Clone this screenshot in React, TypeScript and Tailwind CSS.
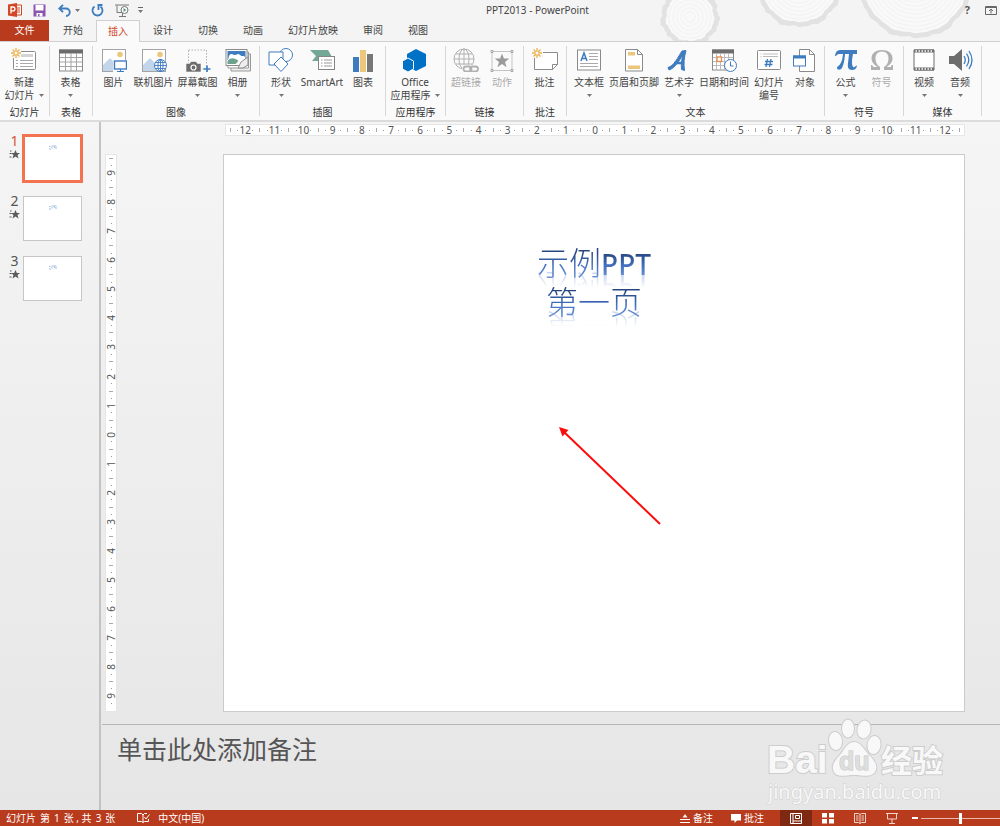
import { useState } from "react";
import type { ReactNode } from "react";

const BLUE = "#3f7cbf";
const GRAY = "#6d6d6d";
const SAND = "#ecc67b";

/* ── Ribbon icons, all drawn on a 26 × 24 grid ── */

function Icon({ children }: { children: ReactNode }) {
  return (
    <svg viewBox="0 0 26 24" className="h-6 w-[26px] shrink-0" fill="none" aria-hidden="true">
      {children}
    </svg>
  );
}

function Sun() {
  return (
    <g stroke="#edb14f" strokeWidth="1.3">
      <circle cx="5" cy="5" r="2.2" fill="#fff" />
      <path d="M5 0v2M5 8v2M0 5h2M8 5h2M1.5 1.5l1.4 1.4M7.1 7.1l1.4 1.4M8.5 1.5L7.1 2.9M2.9 7.1L1.5 8.5" />
    </g>
  );
}

function Photo() {
  return (
    <g>
      <rect x="1.5" y="1.5" width="23" height="22" fill="#fff" stroke="#a3a3a3" />
      <path d="M2 17l7-7 6 6 3-2 6 4v5H2z" fill="#c3d5ea" />
      <circle cx="19" cy="6.5" r="2.8" fill={SAND} />
    </g>
  );
}

const icons: Record<string, ReactNode> = {
  newSlide: (
    <>
      <rect x="2.5" y="3.5" width="22" height="18" rx="1" fill="#fff" stroke="#8c8c8c" />
      <rect x="10" y="6" width="12" height="3" fill="#d4d4d4" />
      <path d="M5 12.5h2M9 12.5h13M5 15.5h2M9 15.5h13M5 18.5h2M9 18.5h13" stroke="#a9a9a9" />
      <rect x="0" y="0" width="10" height="10" fill="#fafafa" />
      <Sun />
    </>
  ),
  table: (
    <>
      <rect x="1.5" y="2" width="23" height="21" fill="#fff" stroke="#8a8a8a" />
      <rect x="1" y="1.5" width="24" height="4" fill={GRAY} />
      <path d="M2 9.5h22M2 14h22M2 18.5h22M7.5 5v18M13 5v18M18.5 5v18" stroke="#a5a5a5" />
    </>
  ),
  picture: (
    <>
      <Photo />
      <rect x="12" y="12" width="14" height="12" fill="#fafafa" />
      <rect x="13.5" y="13" width="12" height="8" fill="#fff" stroke={BLUE} strokeWidth="1.4" />
      <path d="M19.5 21v2M16 23.5h7" stroke={BLUE} strokeWidth="1.2" />
    </>
  ),
  onlinePicture: (
    <>
      <Photo />
      <circle cx="19.5" cy="17.5" r="6" fill="#fff" stroke={BLUE} />
      <ellipse cx="19.5" cy="17.5" rx="2.6" ry="6" stroke={BLUE} />
      <path d="M13.5 17.5h12M14.5 14.5h10M14.5 20.5h10M19.5 11.5v12" stroke={BLUE} strokeWidth=".9" />
    </>
  ),
  screenshot: (
    <>
      <rect x="3.5" y="2" width="18" height="19" stroke="#b0b0b0" strokeDasharray="1.5 1.5" />
      <path d="M1 15.5h3.5L6 13.5h5l1.5 2H16V24H1z" fill={GRAY} stroke="#fafafa" strokeWidth=".6" />
      <circle cx="8.5" cy="19.5" r="2.5" stroke="#fff" strokeWidth="1.2" />
      <path d="M22 17.5v7M18.5 21h7" stroke={BLUE} strokeWidth="1.7" />
    </>
  ),
  album: (
    <>
      <path d="M6 6h19.5v17H6z" fill="#eee" stroke="#999" />
      <path d="M3 4h20.5v16H3z" fill="#fff" stroke="#999" />
      <rect x="1" y="1.5" width="21" height="16" fill="#fff" stroke="#8b8b8b" />
      <path d="M2.5 3h18v9h-18z" fill={BLUE} />
      <path d="M4 8c2-4 4-1 6-1s3-2 5 0 4 0 5 2v3H3z" fill="#fff" />
      <path d="M2.5 13c4-4 7-3 11 0l-3 3h-8z" fill="#6da28e" />
      <path d="M13 20l3-6 7-5v8l-5 3z" fill="#eee" stroke="#8b8b8b" />
    </>
  ),
  shapes: (
    <g stroke={BLUE} fill="#fff">
      <circle cx="18" cy="7" r="6.5" />
      <path d="M1 4h14v13H1z" />
      <path d="M13 9l7 7-7 7.5L6 16z" />
    </g>
  ),
  smartArt: (
    <>
      <path d="M1 2h18l4 7-2 4H3l4-5z" fill="#73a896" />
      <rect x="9.5" y="8.5" width="16" height="13" fill="#fff" stroke="#858585" />
      <path d="M12 12h1.5M15 12h8M12 15h1.5M15 15h8M12 18h1.5M15 18h8" stroke="#999" />
    </>
  ),
  chart: (
    <>
      <path d="M3 9h6v15H3z" fill={BLUE} />
      <path d="M10 2h6v22h-6z" fill={SAND} />
      <path d="M17 6h6v18h-6z" fill="#777" />
    </>
  ),
  office: (
    <g fill="#0072c6">
      <path d="M14 1l10 5v12l-10 5-9-5V6z" />
      <path d="M6 10l5.5 3v8L6 24l-5.500-3v-8z" stroke="#fafafa" />
    </g>
  ),
  hyperlink: (
    <g stroke="#b1b1b1">
      <circle cx="11" cy="11" r="10" />
      <ellipse cx="11" cy="11" rx="5" ry="10" />
      <path d="M11 1v20M1 11h20M3 6h16M3 16h16" />
      <rect x="9" y="17" width="17" height="7" fill="#fafafa" stroke="none" />
      <rect x="10.5" y="18.5" width="8" height="5" rx="2.5" strokeWidth="1.8" />
      <rect x="17" y="18.5" width="8" height="5" rx="2.5" strokeWidth="1.8" />
    </g>
  ),
  action: (
    <>
      <rect x="3" y="3.5" width="20" height="19" stroke="#c4c4c4" />
      <path d="M2 2.5h2v2H2zM22 2.5h2v2h-2zM2 21.5h2v2H2zM22 21.5h2v2h-2z" fill="#fff" stroke="#9c9c9c" strokeWidth=".9" />
      <path d="M13 5.5l1.9 5.1h5.4l-4.3 3.3 1.6 5.3-4.6-3.2-4.6 3.2 1.6-5.3-4.3-3.3h5.4z" fill="#9b9b9b" />
    </>
  ),
  comment: (
    <>
      <path d="M2.5 4.5h23v12l-5 5h-18z" fill="#fff" stroke="#8c8c8c" />
      <path d="M20.5 21.5v-5h5" stroke="#8c8c8c" />
      <rect x="0" y="0" width="11" height="10" fill="#fafafa" />
      <Sun />
    </>
  ),
  textBox: (
    <>
      <rect x="1.5" y="2" width="23" height="20" fill="#fff" stroke="#8a8a8a" />
      <path d="M5 13l3-8 3 8M6 10.5h4" stroke={BLUE} strokeWidth="1.5" />
      <path d="M13 5.5h9M13 8.5h9M13 11.5h9M4 15.5h18M4 18.5h18" stroke="#aaa" />
    </>
  ),
  headerFooter: (
    <>
      <path d="M4.5 1.5h12l5 5V23h-17z" fill="#fff" stroke="#8a8a8a" />
      <path d="M16.5 1.5v5h5" stroke="#8a8a8a" />
      <path d="M7 4h7v3.5H7zM7 17.5h12V21H7z" fill={SAND} />
    </>
  ),
  wordArt: (
    <>
      <path d="M2 19.5C8 18 12 9 16 3l4-.5c-2 7-2.500 13-1.500 20l-3-1c-.5-5 0-10 1.500-15C13 13 9 20 3 22z" fill={BLUE} stroke={BLUE} />
      <path d="M8 15h10" stroke={BLUE} strokeWidth="2.5" />
    </>
  ),
  dateTime: (
    <>
      <rect x="1.5" y="2" width="21" height="20" fill="#fff" stroke="#8a8a8a" />
      <path d="M1 1.5h22v4H1z" fill={GRAY} />
      <path d="M2 9.5h20M2 13.5h20M2 17.5h20M5.5 6v16M9.5 6v16M13.5 6v16M17.5 6v16" stroke="#bbb" />
      <rect x="6" y="9" width="4.5" height="4.5" fill="#fff" stroke="#e58a4c" strokeWidth="1.3" />
      <circle cx="19.5" cy="17.5" r="6" fill="#fff" stroke={BLUE} />
      <path d="M19.5 13.5V18h3" stroke={BLUE} />
    </>
  ),
  slideNumber: (
    <>
      <rect x="1.5" y="2.5" width="23" height="19" rx="1" fill="#fff" stroke="#8a8a8a" />
      <path d="M4.5 6h1M7 6h15M4.5 8.5h1M7 8.5h15" stroke="#bbb" />
      <path d="M11.5 11L10 19M15 11l-1.5 8M9 13.5h8M8.5 16.5h8" stroke={BLUE} strokeWidth="1.3" />
    </>
  ),
  object: (
    <>
      <path d="M7.5 1.5h10l5 5v17h-15z" fill="#fff" stroke="#8a8a8a" />
      <path d="M17.5 1.5v5h5" stroke="#8a8a8a" />
      <rect x="1.5" y="8" width="12" height="10" fill="#fff" stroke={BLUE} />
      <path d="M1 7.5h13v3H1z" fill={BLUE} />
    </>
  ),
  equation: (
    <path
      d="M2 8c.5-4 2-6 5-6h17v4h-4c-1 5-1.500 9-.5 12 .8 1.800 2.500 1.500 3.500-.5l1 .5c-1 3-2.500 4-5 4-4 0-4.500-3-4-7l1-9h-4c-.5 7-1.500 11-3 14-1.500 2.500-5 2-5 0 0-1.500 1.500-2 2.500-3C9 14 9.500 10 10 6H7C5 6 4 6.500 3 8z"
      fill={BLUE}
    />
  ),
  symbol: (
    <path
      d="M2 22v-5h1.500c0 1.500.5 2 2 2h3C5 17 2.500 14 2.500 10.500 2.500 5 7 2 13 2s10.500 3 10.500 8.500c0 3.500-2.500 6.500-6 8.500h3c1.500 0 2-.5 2-2H24v5h-9v-3c3-1.500 4.500-5 4.500-8.500 0-4-2-7-6.500-7s-6.500 3-6.500 7c0 3.500 1.500 7 4.500 8.500v3z"
      fill="#b0b0b0"
    />
  ),
  video: (
    <>
      <path d="M3 2h20v20H3z" fill="#fff" stroke={GRAY} />
      <path d="M3 3h20M3 21h20" stroke={GRAY} strokeWidth="3" />
      <path d="M4.5 3h17M4.5 21h17" stroke="#fff" strokeWidth="1.5" strokeDasharray="1.5 1.5" />
    </>
  ),
  audio: (
    <>
      <path d="M2 8h5l8-7v22l-8-7H2z" fill={GRAY} />
      <path d="M17 8q2.5 4 0 8M19.5 5.5q4.5 6.5 0 13M22 3q6 9 0 18" stroke={BLUE} strokeWidth="1.3" />
    </>
  ),
};

type Tool = {
  icon: string;
  label: string;
  second?: string;
  menu?: boolean;
  disabled?: boolean;
  width: string;
};

const groups: { title: string; width: string; tools: Tool[] }[] = [
  {
    title: "幻灯片",
    width: "w-[50px]",
    tools: [{ icon: "newSlide", label: "新建", second: "幻灯片", menu: true, width: "w-12" }],
  },
  {
    title: "表格",
    width: "w-[43px]",
    tools: [{ icon: "table", label: "表格", menu: true, width: "w-9" }],
  },
  {
    title: "图像",
    width: "w-[167px]",
    tools: [
      { icon: "picture", label: "图片", width: "w-9" },
      { icon: "onlinePicture", label: "联机图片", width: "w-11" },
      { icon: "screenshot", label: "屏幕截图", menu: true, width: "w-11" },
      { icon: "album", label: "相册", menu: true, width: "w-9" },
    ],
  },
  {
    title: "插图",
    width: "w-[126px]",
    tools: [
      { icon: "shapes", label: "形状", menu: true, width: "w-9" },
      { icon: "smartArt", label: "SmartArt", width: "w-[46px]" },
      { icon: "chart", label: "图表", width: "w-9" },
    ],
  },
  {
    title: "应用程序",
    width: "w-[60px]",
    tools: [{ icon: "office", label: "Office", second: "应用程序", menu: true, width: "w-14" }],
  },
  {
    title: "链接",
    width: "w-[78px]",
    tools: [
      { icon: "hyperlink", label: "超链接", disabled: true, width: "w-9" },
      { icon: "action", label: "动作", disabled: true, width: "w-9" },
    ],
  },
  {
    title: "批注",
    width: "w-[43px]",
    tools: [{ icon: "comment", label: "批注", width: "w-9" }],
  },
  {
    title: "文本",
    width: "w-[258px]",
    tools: [
      { icon: "textBox", label: "文本框", menu: true, width: "w-10" },
      { icon: "headerFooter", label: "页眉和页脚", width: "w-[50px]" },
      { icon: "wordArt", label: "艺术字", menu: true, width: "w-10" },
      { icon: "dateTime", label: "日期和时间", width: "w-[50px]" },
      { icon: "slideNumber", label: "幻灯片", second: "编号", width: "w-10" },
      { icon: "object", label: "对象", width: "w-8" },
    ],
  },
  {
    title: "符号",
    width: "w-[79px]",
    tools: [
      { icon: "equation", label: "公式", menu: true, width: "w-9" },
      { icon: "symbol", label: "符号", disabled: true, width: "w-9" },
    ],
  },
  {
    title: "媒体",
    width: "w-[78px]",
    tools: [
      { icon: "video", label: "视频", menu: true, width: "w-9" },
      { icon: "audio", label: "音频", menu: true, width: "w-9" },
    ],
  },
];

const tabs = ["开始", "插入", "设计", "切换", "动画", "幻灯片放映", "审阅", "视图"];

function Caret() {
  return (
    <svg viewBox="0 0 5 3" className="h-[3px] w-[5px] shrink-0" aria-hidden="true">
      <path d="M0 0h5L2.5 3z" fill="#777" />
    </svg>
  );
}

/* ── Tree-ring decoration behind the title bar ── */

function ringPath(cx: number, cy: number, r: number, rough: number) {
  const points = Array.from({ length: 90 }, (_, i) => {
    const a = (i / 90) * Math.PI * 2;
    const k = r + rough * (Math.sin(a * 7) * 0.6 + Math.sin(a * 13 + 1) * 0.7 + Math.sin(a * 29) * 0.6);
    return `${(cx + Math.cos(a) * k).toFixed(1)} ${(cy + Math.sin(a) * k).toFixed(1)}`;
  });
  return `M${points.join("L")}Z`;
}

function TreeRings() {
  const trunks = [
    { cx: 50, cy: 17, r: 29 },
    { cx: 159, cy: -16, r: 43 },
    { cx: 275, cy: -20, r: 58 },
  ];
  return (
    <svg viewBox="0 0 360 41" className="absolute right-0 top-0 h-[41px] w-[360px]" aria-hidden="true">
      {trunks.map(({ cx, cy, r }) => (
        <g key={cx} fill="none">
          <path d={ringPath(cx, cy, r, 1.1)} fill="#e2e2e2" />
          <path d={ringPath(cx, cy, r - 5, 0.6)} fill="#f9f9f9" />
          {Array.from({ length: Math.floor(r / 4) - 2 }, (_, i) => (
            <path key={i} d={ringPath(cx, cy, r - 8 - i * 4, 0.2)} stroke="#f2f2f2" />
          ))}
        </g>
      ))}
    </svg>
  );
}

function TitleBar() {
  return (
    <div className="relative flex h-5 items-center">
      <div className="flex w-[146px] items-center pl-2">
        <svg viewBox="0 0 14 14" className="h-3.5 w-3.5" role="img" aria-label="PowerPoint">
          <path d="M8 2h5.5v10H8" fill="#fff" stroke="#d24726" />
          <path d="M9 5h3M9 7h3M9 9h3" stroke="#d24726" />
          <path d="M0 1.5L9 0v14l-9-1.5z" fill="#d24726" />
          <path d="M3 10.5V4h2a1.8 1.8 0 010 3.8H3" fill="none" stroke="#fff" strokeWidth="1.3" />
        </svg>
        <button aria-label="保存" className="ml-[11px]">
          <svg viewBox="0 0 13 13" className="h-[13px] w-[13px]">
            <path d="M.5.5h12v12H.5z" fill="#8b55ae" />
            <path d="M2.5 1h8v5.5h-8zM3.5 9h6v3.5h-6z" fill="#fff" />
            <path d="M5 10h1.5v2.5H5z" fill="#8b55ae" />
          </svg>
        </button>
        <button aria-label="撤消" className="ml-3 flex items-center gap-1">
          <svg viewBox="0 0 13 13" className="h-[13px] w-[13px]" fill="none" stroke={BLUE} strokeWidth="1.9">
            <path d="M5 .8L1.3 4.5 5 8.2M1.5 4.5H8A3.6 3.6 0 018 12" />
          </svg>
          <Caret />
        </button>
        <button aria-label="重复" className="ml-[11px]">
          <svg viewBox="0 0 13 13" className="h-[13px] w-[13px]" fill="none" stroke={BLUE} strokeWidth="1.8">
            <path d="M3.5 2.5A5 5 0 109.5 2.5M6.5 1h5M7.5 1v5" />
          </svg>
        </button>
        <button aria-label="从头开始" className="ml-[11px]">
          <svg viewBox="0 0 15 13" className="h-[13px] w-[15px]" fill="none" stroke="#777">
            <path d="M0 1h14M2 1.5v7h5M7.5 9v3M4 12.5h7" />
            <circle cx="9.5" cy="6" r="3.5" fill="#fff" />
            <path d="M8.5 4v4l3-2z" fill="#5c9f83" stroke="none" />
          </svg>
        </button>
        <button aria-label="自定义快速访问工具栏" className="ml-2 flex flex-col items-center gap-0.5">
          <span className="h-px w-[5px] bg-[#666]" />
          <Caret />
        </button>
      </div>
      <h1 className="flex-1 text-center text-[10px] text-[#444]">PPT2013 - PowerPoint</h1>
      <div className="flex w-[71px] items-center justify-end gap-[15px] pr-[3px]">
        <button aria-label="帮助" className="text-[11px] font-bold leading-3 text-[#555]">
          ?
        </button>
        <button aria-label="功能区显示选项">
          <svg viewBox="0 0 12 9" className="h-[9px] w-3" fill="none" stroke="#666">
            <path d="M.5.5h11v8H.5zM.5 1.5h11M6 7.5v-4M4 5l2-2 2 2" />
          </svg>
        </button>
      </div>
    </div>
  );
}

function TabBar({ active, onSelect }: { active: string; onSelect: (tab: string) => void }) {
  return (
    <nav className="relative flex h-[22px] border-b border-[#d0d0d0] text-[10px]">
      <button className="h-[21px] w-[49px] bg-[#b83b1d] text-white">文件</button>
      <div className="ml-0.5 flex gap-px">
        {tabs.map((tab) => (
          <button
            key={tab}
            onClick={() => onSelect(tab)}
            className={
              tab === active
                ? "h-[22px] border border-b-0 border-[#d0d0d0] bg-[#fafafa] px-[11px] text-[#d24726]"
                : "h-[21px] px-3 text-[#444]"
            }
          >
            {tab}
          </button>
        ))}
      </div>
    </nav>
  );
}

function ToolButton({ tool }: { tool: Tool }) {
  return (
    <button
      disabled={tool.disabled}
      className={`flex flex-col items-center whitespace-nowrap text-[10px] leading-[13px] text-[#444] disabled:text-[#aaa] ${tool.width}`}
    >
      <Icon>{icons[tool.icon]}</Icon>
      <span className="mt-1">{tool.label}</span>
      <span className="flex h-[13px] items-center gap-1">
        {tool.second}
        {tool.menu && <Caret />}
      </span>
    </button>
  );
}

function Ribbon() {
  return (
    <div className="flex h-20 border-b-2 border-[#dcdcdc] bg-[#fafafa] py-1">
      {groups.map((group) => (
        <section
          key={group.title}
          className={`flex shrink-0 flex-col justify-between border-r border-[#d8d8d8] pt-0.5 ${group.width}`}
        >
          <div className="flex justify-center pr-px">
            {group.tools.map((tool) => (
              <ToolButton key={tool.icon} tool={tool} />
            ))}
          </div>
          <h2 className="text-center text-[10px] leading-2 text-[#333]">{group.title}</h2>
        </section>
      ))}
    </div>
  );
}

function Ruler({ max, vertical = false }: { max: number; vertical?: boolean }) {
  const marks = Array.from({ length: max * 2 + 1 }, (_, i) => Math.abs(i - max));
  const slot = "flex flex-1 basis-0 items-center justify-center min-w-0 min-h-0";
  const flow = vertical ? "flex-col" : "flex-row";
  return (
    <div
      aria-hidden="true"
      className={`flex overflow-hidden border border-[#e6e6e6] bg-white text-[10px] leading-none text-[#555] ${
        vertical ? "w-3 flex-col pb-1" : "h-3 flex-row px-px"
      }`}
    >
      {marks.map((n, i) => (
        <div key={i} className={`flex min-h-0 min-w-0 flex-[4] ${flow}`}>
          <span className={slot}>
            <i className={vertical ? "h-px w-1 bg-[#aaa]" : "h-1 w-px bg-[#aaa]"} />
          </span>
          <span className={slot}>
            <i className="h-px w-px bg-[#999]" />
          </span>
          <span className={slot}>
            <b className={vertical ? "-rotate-90 font-normal" : "font-normal"}>{n}</b>
          </span>
          <span className={slot}>
            <i className="h-px w-px bg-[#999]" />
          </span>
        </div>
      ))}
      {!vertical && (
        <span className={slot}>
          <i className="h-1 w-px bg-[#aaa]" />
        </span>
      )}
    </div>
  );
}

function SlideList() {
  const [selected, setSelected] = useState(1);
  return (
    <aside className="flex w-[101px] shrink-0 flex-col gap-[11px] border-r-2 border-[#c3c3c3] pl-[9px] pt-3">
      {[1, 2, 3].map((n) => (
        <button key={n} onClick={() => setSelected(n)} className="flex h-[49px] items-start gap-0.5">
          <span className="flex w-[11px] flex-col items-center gap-0.5">
            <span className={`text-[14px] leading-[13px] ${n === selected ? "text-[#d9532f]" : "text-[#555]"}`}>
              {n}
            </span>
            <svg viewBox="0 0 12 11" className="h-[11px] w-3" fill="#5b5b5b" aria-hidden="true">
              <path d="M6.5 1l1.3 3h3.2L8.500 6l1 3.500-3-2-3 2 1-3.500L2 4h3.200zM.5 4h2v1h-2zM.5 7.500h2v1h-2zM1 1.500h1.500v1H1z" />
            </svg>
          </span>
          <span
            className={`flex justify-center bg-white ${
              n === selected
                ? "h-[49px] w-[61px] border-[3px] border-[#f3724f]"
                : "mx-px mt-0.5 h-[45px] w-[59px] border border-[#c6c6c6]"
            }`}
          >
            <svg viewBox="0 0 8 5" className="mt-2 h-[5px] w-2" fill="none" stroke="#a3bce3" aria-hidden="true">
              <path d="M0 1.5h1.500M2.500 1h5M1 3v2M3 2v1.500M5.500 1.500v1.500M7 2v2" />
            </svg>
          </span>
        </button>
      ))}
    </aside>
  );
}

function WordArtLine({ children }: { children: ReactNode }) {
  return (
    <span className="h-[39px] bg-gradient-to-b from-[#27467f] from-25% via-[#4472c4] via-60% to-[#7d9fd8] bg-clip-text text-[32px] font-light leading-[39px] text-transparent [-webkit-box-reflect:below_-14px_linear-gradient(transparent_50%,rgba(0,0,0,0.5))]">
      {children}
    </span>
  );
}

function Slide() {
  return (
    <div className="relative flex flex-1 flex-col items-center border border-[#cbcbcb] bg-white pt-[88px]">
      <WordArtLine>
        示例<span className="text-[28px] font-medium leading-none">PPT</span>
      </WordArtLine>
      <WordArtLine>第一页</WordArtLine>
      <svg viewBox="0 0 102 98" className="absolute left-[335px] top-[272px] h-[98px] w-[102px]" aria-hidden="true">
        <path d="M5 5l96 92" stroke="#fb0d0d" strokeWidth="2" />
        <path d="M0 0l9.500 3-6 6.500z" fill="#fb0d0d" />
      </svg>
    </div>
  );
}

function Watermark() {
  return (
    <svg
      viewBox="0 0 184 92"
      className="pointer-events-none absolute bottom-0 right-[52px] h-[92px] w-[184px]"
      fill="#f8f8f8"
      stroke="#cdcdcd"
      strokeWidth="2"
      paintOrder="stroke"
      fontFamily="'Liberation Sans', 'Noto Sans CJK SC', sans-serif"
    >
      <text x="3" y="55" fontSize="39" fontWeight="700">
        Bai
      </text>
      <ellipse cx="71.500" cy="23" rx="6.500" ry="9" transform="rotate(-8 71.500 23)" />
      <ellipse cx="84" cy="10.500" rx="6" ry="9" />
      <ellipse cx="100" cy="11.500" rx="6.500" ry="9" transform="rotate(10 100 11.500)" />
      <ellipse cx="110" cy="27" rx="6.500" ry="9" transform="rotate(8 110 27)" />
      <path d="M90 24c7 0 10 8 16 14s8 11 5 16c-4 6-12 3-21 3s-17 3-20-3c-3-5 0-11 5-16s8-14 15-14z" />
      <text x="75" y="52" fontSize="25" fontWeight="700" fill="#dedede" stroke="#c4c4c4" strokeWidth="1">
        du
      </text>
      <text x="117" y="54" fontSize="31" fontWeight="700">
        经验
      </text>
      <text x="4" y="81" fontSize="20" strokeWidth="1" fontFamily="'Noto Sans', sans-serif">
        jingyan.baidu.com
      </text>
    </svg>
  );
}

function StatusBar() {
  return (
    <footer className="flex h-4 shrink-0 items-center bg-[#b83b1d] text-[10px] leading-4 text-white">
      <span className="flex gap-1 pl-1.5">
        <span>幻灯片</span>
        <span>第</span>
        <span>1</span>
        <span>张 , 共</span>
        <span>3</span>
        <span>张</span>
      </span>
      <button aria-label="拼写检查" className="ml-[22px]">
        <svg viewBox="0 0 13 11" className="h-[11px] w-[13px]" fill="none" stroke="#fff">
          <path d="M6 9.5l-1.500-1h-4v-8h4L6 2v7.500l1.500-1h4V6M6 2L7.500.5H10M7.500 4L9 6l3.500-4.500" />
        </svg>
      </button>
      <button className="ml-2">中文(中国)</button>
      <button className="ml-auto flex items-center gap-[3px]">
        <svg viewBox="0 0 10 9" className="h-[9px] w-2.5" fill="none" stroke="#fff" aria-hidden="true">
          <path d="M0 5.500h10M0 8.500h10" />
          <path d="M2.500 3.500L5 0l2.500 3.500z" fill="#fff" stroke="none" />
        </svg>
        备注
      </button>
      <button className="ml-[18px] flex items-center gap-[3px]">
        <svg viewBox="0 0 10 9" className="h-[9px] w-2.5" fill="#fff" aria-hidden="true">
          <path d="M0 0h10v6.500H6L3.500 9V6.500H0z" />
        </svg>
        批注
      </button>
      <button aria-label="普通视图" className="ml-4 flex h-4 w-8 items-center justify-center bg-[#7f2913]">
        <svg viewBox="0 0 12 11" className="h-[11px] w-3" fill="none" stroke="#fff">
          <path d="M.5.5h11v10H.5zM3 .5v10M3 8h8.500M5.500 2.500h4v3h-4z" />
        </svg>
      </button>
      <button aria-label="幻灯片浏览" className="flex w-8 justify-center">
        <svg viewBox="0 0 12 11" className="h-[11px] w-3" fill="#fff">
          <path d="M0 0h5v4.500H0zM7 0h5v4.500H7zM0 6h5v4.500H0zM7 6h5v4.500H7z" />
        </svg>
      </button>
      <button aria-label="阅读视图" className="flex w-8 justify-center">
        <svg viewBox="0 0 12 11" className="h-[11px] w-3" fill="none" stroke="#f4d5cc">
          <path d="M6 10.500l-1.500-1h-4v-9h4L6 1.500 7.500.5h4v9h-4zM6 1.500v9M2 3h2.500M2 5h2.500M2 7h2.500M7.500 3H10M7.500 5H10M7.500 7H10" />
        </svg>
      </button>
      <button aria-label="幻灯片放映" className="flex w-8 justify-center">
        <svg viewBox="0 0 12 11" className="h-[11px] w-3" fill="none" stroke="#f4d5cc">
          <path d="M0 .5h12M1.500 1v5h9V1M6 6v4M3 10.500h6" />
        </svg>
      </button>
      <button aria-label="缩小" className="ml-1 flex h-4 w-2 items-center">
        <span className="h-0.5 w-1.5 bg-white" />
      </button>
      <input
        type="range"
        aria-label="显示比例"
        defaultValue={50}
        className="ml-px h-4 w-[79px] appearance-none bg-transparent [&::-webkit-slider-runnable-track]:h-px [&::-webkit-slider-runnable-track]:bg-[#e9b9ab] [&::-webkit-slider-thumb]:-mt-[5px] [&::-webkit-slider-thumb]:h-[11px] [&::-webkit-slider-thumb]:w-[3px] [&::-webkit-slider-thumb]:appearance-none [&::-webkit-slider-thumb]:bg-white"
      />
    </footer>
  );
}

export default function App() {
  const [tab, setTab] = useState("插入");

  return (
    <div className="flex h-screen flex-col overflow-hidden bg-[#f4f4f4] font-['Noto_Sans','Noto_Sans_CJK_SC',sans-serif]">
      {/* ── Window header ── */}
      <header className="relative shrink-0">
        <TreeRings />
        <TitleBar />
        <TabBar active={tab} onSelect={setTab} />
        <Ribbon />
      </header>

      {/* ── Workspace ── */}
      <main className="flex min-h-0 flex-1 bg-gradient-to-b from-[#f5f5f5] to-[#e6e6e6]">
        <SlideList />
        <div className="flex min-w-0 flex-1 flex-col">
          <div className="flex min-h-0 flex-1 flex-col pb-3 pl-1 pr-[35px] pt-0.5">
            <div className="flex flex-col pl-[120px]">
              <Ruler max={12} />
            </div>
            <div className="mt-[18px] flex min-h-0 flex-1 gap-[106px]">
              <Ruler max={9} vertical />
              <Slide />
            </div>
          </div>
          <div className="relative ml-px h-[86px] shrink-0 border-t border-[#b5b5b5]">
            <textarea
              aria-label="备注"
              placeholder="单击此处添加备注"
              className="h-full w-full resize-none bg-transparent px-[15px] pt-1.5 text-[25px] leading-9 outline-none placeholder:text-[#555]"
            />
            <Watermark />
          </div>
        </div>
      </main>

      <StatusBar />
    </div>
  );
}
